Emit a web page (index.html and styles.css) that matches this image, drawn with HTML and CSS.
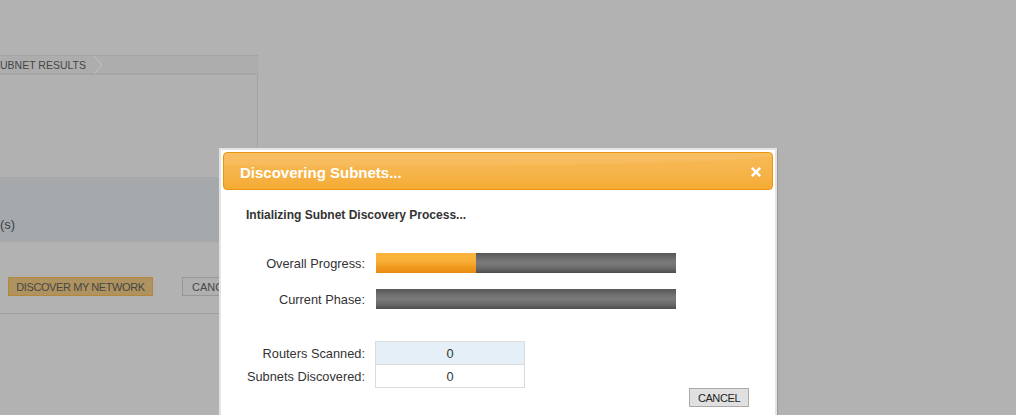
FILE: index.html
```html
<!DOCTYPE html>
<html>
<head>
<meta charset="utf-8">
<link rel="stylesheet" href="styles.css">
</head>
<body>
<div class="page">
  <div class="bg-panel">
    <div class="tabs">
      <span class="tab-label">UBNET RESULTS</span>
      <svg class="chev" width="12" height="18" viewBox="0 0 12 18"><path d="M1 0 L9 9 L1 18" fill="none" stroke="#c4c4c4" stroke-width="1"/></svg>
    </div>
    <div class="panel-body"></div>
  </div>
  <div class="band"><span class="band-text">(s)</span></div>
  <div class="actions">
    <button class="btn-discover">DISCOVER MY NETWORK</button>
    <button class="btn-bg-cancel">CANCEL</button>
  </div>
  <div class="rule"></div>
</div>

<div class="dialog">
  <div class="dialog-header">
    <span class="dialog-title">Discovering Subnets...</span>
    <svg class="close" width="10" height="10" viewBox="0 0 10 10"><path d="M1.8 1.8 L8.2 8.2 M8.2 1.8 L1.8 8.2" stroke="#fff" stroke-width="2.6" stroke-linecap="square"/></svg>
  </div>
  <div class="dialog-body">
    <div class="status">Intializing Subnet Discovery Process...</div>
    <div class="prog-row first">
      <span class="label">Overall Progress:</span>
      <div class="bar"><div class="fill" style="width:33.3%"></div></div>
    </div>
    <div class="prog-row second">
      <span class="label">Current Phase:</span>
      <div class="bar"><div class="fill" style="width:0%"></div></div>
    </div>
    <div class="counters">
      <div class="count-row">
        <span class="label">Routers Scanned:</span>
        <div class="cell shaded">0</div>
      </div>
      <div class="count-row">
        <span class="label">Subnets Discovered:</span>
        <div class="cell">0</div>
      </div>
    </div>
    <div class="footer">
      <button class="btn-cancel">CANCEL</button>
    </div>
  </div>
</div>
</body>
</html>
```
FILE: styles.css
```css
html, body {
  margin: 0;
  padding: 0;
}
body {
  width: 1016px;
  height: 415px;
  overflow: hidden;
  background: #b2b2b2;
  font-family: "Liberation Sans", Arial, sans-serif;
  position: relative;
}
.page {
  padding-top: 55px;
}
.bg-panel {
  width: 258px;
}
.tabs {
  height: 17px;
  background: #adadad;
  border-top: 1px solid #a4a4a4;
  border-bottom: 2px solid #a6a6a6;
  display: flex;
  align-items: center;
  overflow: hidden;
}
.tab-label {
  font-size: 10.5px;
  color: #454545;
  white-space: nowrap;
}
.chev {
  margin-left: 7px;
}
.panel-body {
  height: 102px;
  border-right: 1px solid #a4a4a4;
  background: #b1b1b1;
}
.band {
  width: 400px;
  height: 65px;
  background: #a6a9ac;
  display: flex;
  align-items: flex-end;
}
.band-text {
  font-size: 13px;
  color: #3b3f4a;
  margin-bottom: 10px;
}
.actions {
  display: flex;
  gap: 29px;
  padding-left: 8px;
  margin-top: 35px;
  height: 19px;
}
.actions button {
  font-family: "Liberation Sans", Arial, sans-serif;
  font-size: 11px;
  height: 19px;
  padding: 0;
  color: #474747;
  white-space: nowrap;
}
.btn-discover {
  width: 145px;
  background: #ae925f;
  border: 1px solid #b68639;
  letter-spacing: -0.4px;
}
.btn-bg-cancel {
  width: 60px;
  background: #b0b0b0;
  border: 1px solid #979797;
  text-align: left;
  padding-left: 9px !important;
}
.rule {
  width: 220px;
  margin-top: 17px;
  border-top: 1px solid #a0a0a0;
}

/* Dialog */
.dialog {
  position: absolute;
  left: 219px;
  top: 148px;
  width: 550px;
  height: 300px;
  border: 2px solid #e4e4e4;
  padding: 2px;
  background: #fff;
  box-shadow: 1px 1px 1px rgba(0, 0, 0, 0.12);
}
.dialog-header {
  height: 36px;
  border: 1px solid #eb950f;
  border-radius: 4px;
  background:
    radial-gradient(ellipse 120% 60% at 30% 0%, rgba(255,255,255,0.07) 60%, rgba(255,255,255,0) 61%),
    linear-gradient(#f7b957 0%, #f6b44b 50%, #f5ab34 100%);
  display: flex;
  align-items: center;
  justify-content: space-between;
  padding: 0 11px 0 16px;
}
.dialog-title {
  color: #fff;
  font-weight: bold;
  font-size: 15px;
  margin-top: 3px;
}
.close {
  margin-top: 2px;
}
.dialog-body {
  display: flex;
  flex-direction: column;
}
.status {
  font-size: 12px;
  font-weight: bold;
  color: #333;
  line-height: 14px;
  margin-top: 18px;
  margin-left: 23px;
}
.label {
  width: 142px;
  text-align: right;
  font-size: 12.8px;
  color: #333;
  flex: none;
}
.prog-row {
  display: flex;
  align-items: center;
  height: 20px;
}
.prog-row.first {
  margin-top: 31px;
}
.prog-row.second {
  margin-top: 16px;
}
.prog-row .label {
  margin-right: 11px;
}
.bar {
  width: 300px;
  height: 20px;
  background: linear-gradient(#575757 0%, #6f6f6f 30%, #7a7a7a 50%, #6a6a6a 75%, #4e4e4e 100%);
  display: flex;
}
.fill {
  height: 100%;
  background: linear-gradient(#fab43c 0%, #f9b038 40%, #ef9a1d 70%, #e88a12 100%);
}
.counters {
  margin-top: 32px;
  display: flex;
  flex-direction: column;
}
.count-row {
  display: flex;
  align-items: center;
}
.count-row .label {
  margin-right: 10px;
}
.cell {
  width: 148px;
  height: 22px;
  border: 1px solid #dcdcdc;
  border-top: none;
  font-size: 12.8px;
  color: #333;
  display: flex;
  align-items: center;
  justify-content: center;
}
.count-row:first-child .cell {
  border-top: 1px solid #dcdcdc;
}
.cell.shaded {
  background: #e4eff8;
}
.footer {
  display: flex;
  justify-content: flex-end;
  padding-right: 24px;
  margin-top: 0;
}
.btn-cancel {
  width: 60px;
  height: 19px;
  padding: 0;
  background: #e0e0e0;
  border: 1px solid #a9a9a9;
  font-family: "Liberation Sans", Arial, sans-serif;
  font-size: 11px;
  letter-spacing: -0.4px;
  color: #222;
}
```
